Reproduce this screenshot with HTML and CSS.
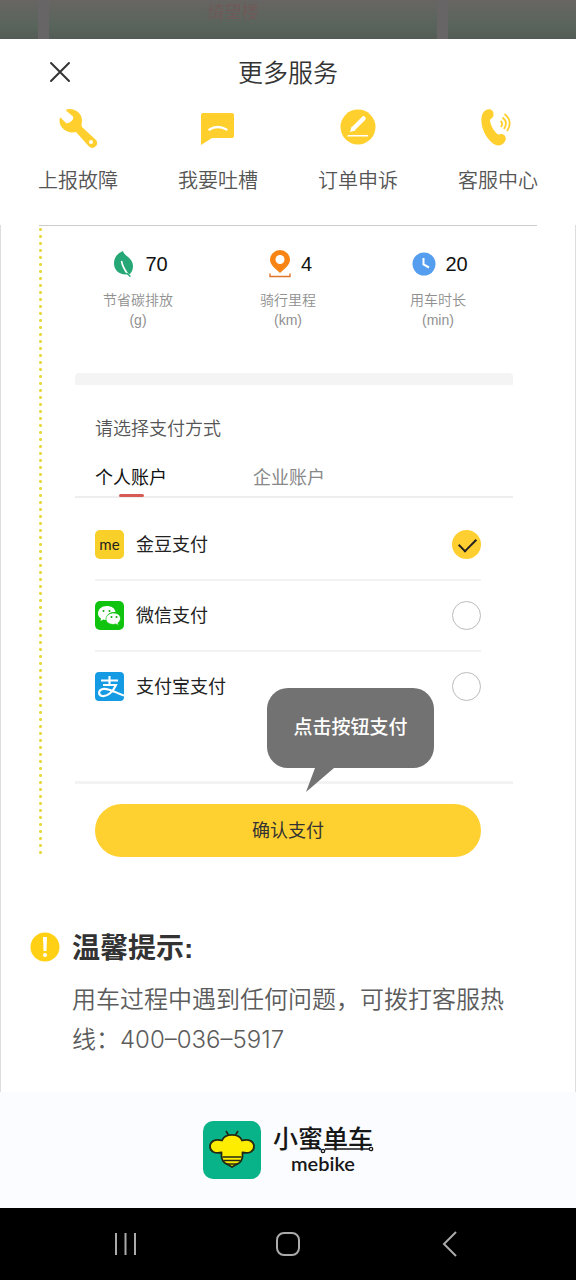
FILE: index.html
```html
<!DOCTYPE html>
<html lang="zh-CN">
<head>
<meta charset="utf-8">
<meta name="viewport" content="width=device-width, initial-scale=1">
<title>更多服务</title>
<link rel="stylesheet" href="styles.css">
</head>
<body>
<div class="map"><span class="road road-left"></span><span class="place">绮望楼</span><span class="road road-right"></span></div>
<main class="sheet">
  <header class="sheet-head">
    <button class="close" type="button" aria-label="关闭"><svg width="22" height="22" viewBox="0 0 22 22"><path d="M2 2 20 20M20 2 2 20" fill="none" stroke="#333" stroke-width="2" stroke-linecap="round"/></svg></button>
    <h1 class="title">更多服务</h1>
  </header>
  <nav class="services">
    <button class="service" type="button">
      <svg width="42" height="42" viewBox="0 0 42 42"><path d="M9 2.500C17 0 25 6 25 13c0 3-1 5 0 7l14 13c4 5-3 10.500-7 6.500L19 25C11 27 3 22 2.500 14c0-2 .3-3 1-3.500L9 16q2 1 5-1.500t2-5L9.500 4Z" fill="#ffcf2d"/><circle cx="34" cy="35" r="2" fill="#fff"/></svg>
      <span>上报故障</span>
    </button>
    <button class="service" type="button">
      <svg width="42" height="42" viewBox="0 0 42 42"><path d="M6 6h29q2 0 2 2v21q0 2-2 2H15L4 38V8q0-2 2-2Z" fill="#ffcf2d"/><path d="M12.500 22.500q8-5 17 0" fill="none" stroke="#fff" stroke-width="2.500" stroke-linecap="round"/></svg>
      <span>我要吐槽</span>
    </button>
    <button class="service" type="button">
      <svg width="42" height="42" viewBox="0 0 42 42"><circle cx="21" cy="20" r="17.500" fill="#ffcf2d"/><path d="m17 21 9.500-9.500" stroke="#fff" stroke-width="4.500" stroke-linecap="round"/><path d="m13 25 1.500-5.500 4 4ZM11 28h20v1.600H10Z" fill="#fff"/></svg>
      <span>订单申诉</span>
    </button>
    <button class="service" type="button">
      <svg width="42" height="42" viewBox="0 0 42 42"><path d="M9 3c5-2 8 1 7.500 5-.5 4-3.500 3-3.500 6 1 5 4 10.500 8 13.500 2 .5 4-2 7 1.500 2 3 0 7-4 9-6 2-12-4-16-11C4 19 2 7 9 3Z" fill="#ffcf2d"/><path d="M23.500 14q3 2 .5 6M25.500 10.500q6 4.500 1.500 11.500M27.500 7q9 7 2.500 17" fill="none" stroke="#ffcf2d" stroke-width="1.800"/></svg>
      <span>客服中心</span>
    </button>
  </nav>
  <div class="guide">
    <section class="demo">
      <dl class="stats">
        <div class="stat">
          <dt>节省碳排放<br>(g)</dt>
          <dd><svg width="24" height="28" viewBox="0 0 24 28"><path d="M11 1c1 5 10 7 10 15 0 3-1 6-3 8-10 2-16-3-16-11C2 7 6 3 11 1Z" fill="#25a875"/><path d="M9.500 11c1 6 3 9 7 14" fill="none" stroke="#fff" stroke-width="1.600"/><path d="m14.500 23 4 3.500" stroke="#25a875" stroke-width="1.600"/></svg>70</dd>
        </div>
        <div class="stat">
          <dt>骑行里程<br>(km)</dt>
          <dd><svg width="24" height="28" viewBox="0 0 24 28"><path d="M12 0a10 10 0 0 1 10 10c0 5-6 9-10 13C8 19 2 15 2 10A10 10 0 0 1 12 0Z" fill="#f88413"/><circle cx="12" cy="9.500" r="4.500" fill="#fff"/><path d="M2 23.500v3h20v-3" fill="none" stroke="#e0762b" stroke-width="1.400"/></svg>4</dd>
        </div>
        <div class="stat">
          <dt>用车时长<br>(min)</dt>
          <dd><svg width="24" height="28" viewBox="0 0 24 28"><circle cx="12" cy="14" r="11.500" fill="#559dee"/><path d="M11.500 8v6.500l5.500 3" fill="none" stroke="#fff" stroke-width="2"/></svg>20</dd>
        </div>
      </dl>
      <form class="payment">
        <h2 class="choose">请选择支付方式</h2>
        <div class="tabs" role="tablist">
          <button class="tab active" type="button" role="tab" aria-selected="true">个人账户</button>
          <button class="tab" type="button" role="tab" aria-selected="false">企业账户</button>
        </div>
        <div class="methods">
          <label class="method"><span class="pay-logo gold">me</span><span>金豆支付</span><input type="radio" name="pay" checked></label>
          <label class="method"><svg class="pay-logo" viewBox="0 0 29 29"><rect width="29" height="29" rx="5" fill="#10c30e"/><path d="M12 5C6.500 5 3 8.500 3 12.500c0 2.500 1.500 4 3 5L5.500 20l3-1.500q2 .7 4 .5C10 14 15 10.500 20.500 11 20 7 16 5 12 5Z" fill="#fff"/><path d="M19 12c-5 0-8 2.500-8 6 0 4 5 6.500 10 5l2.500 1.500-.5-2.500c5-4 2-10-4-10Z" fill="#fff" stroke="#10c30e" stroke-width=".7"/><g fill="#10a80e"><circle cx="8.500" cy="10" r="1"/><circle cx="14.500" cy="10" r="1"/><circle cx="16.500" cy="16" r="1"/><circle cx="21.500" cy="16" r="1"/></g></svg><span>微信支付</span><input type="radio" name="pay"></label>
          <label class="method"><svg class="pay-logo" viewBox="0 0 29 29"><rect width="29" height="29" rx="4" fill="#159be3"/><path d="M6 8.500h17M14.500 4v9M8 13h13C18 20 12 25 7 24c-4-1-4-6 1-7 6-1 13 4 21 6.500" fill="none" stroke="#fff" stroke-width="2.100"/></svg><span>支付宝支付</span><input type="radio" name="pay"></label>
        </div>
        <div class="submit-area">
          <div class="bubble">点击按钮支付<svg width="30" height="25" viewBox="0 0 30 25"><path d="M9 0h19L0 24Z" fill="#727272"/></svg></div>
          <button class="submit" type="button">确认支付</button>
        </div>
      </form>
    </section>
  </div>
  <section class="tips">
    <svg width="30" height="30" viewBox="0 0 30 30"><circle cx="15" cy="15" r="14.500" fill="#ffd013"/><path d="M13 5h4l-.5 14h-3Z" fill="#fff"/><circle cx="15" cy="23" r="2" fill="#fff"/></svg>
    <div>
      <h2>温馨提示:</h2>
      <p>用车过程中遇到任何问题，可拨打客服热线：400–036–5917</p>
    </div>
  </section>
  <footer class="brand">
    <svg width="58" height="58" viewBox="0 0 58 58"><rect width="58" height="58" rx="10" fill="#09b38a"/><path d="m23 10 3 5M35 10l-3 5" stroke="#222914" stroke-width="1.700"/><path d="M19 19.500C22 12 36 12 39 19.500c7-2 12 1 12 6 0 5-5 7.500-11.500 6C40 37 39 40 36 42l-7 4-7-4c-3-2-4-5-3.500-10.500C12 33 7 30.500 7 25.500c0-5 5-8 12-6Z" fill="#ffed00" stroke="#222914" stroke-width="1.800" stroke-linejoin="round"/><path d="M19.500 36h19M20.500 39.500h17M23 43h12" stroke="#222914" stroke-width="1.400"/></svg>
    <div class="brand-name"><strong>小蜜单车</strong><span>mebike</span><svg class="brand-chain" width="56" height="10" viewBox="0 0 56 10" fill="none" stroke="#171717" stroke-width="1.300"><circle cx="4" cy="7" r="1.700"/><path d="M6 5h44"/><circle cx="52" cy="5" r="1.700"/></svg></div>
  </footer>
</main>
<nav class="system-nav">
  <button type="button" aria-label="最近任务"><svg width="24" height="26" viewBox="0 0 24 26"><path d="M2 2v22M11.500 2v22M21 2v22"/></svg></button>
  <button type="button" aria-label="主页"><svg width="24" height="26" viewBox="0 0 24 26"><rect x="1" y="2" width="22" height="22" rx="7"/></svg></button>
  <button type="button" aria-label="返回"><svg width="24" height="26" viewBox="0 0 24 26"><path d="M18 1 6 13l12 12"/></svg></button>
</nav>
</body>
</html>
```
FILE: styles.css
```css
* { box-sizing: border-box; }
body, h1, h2, p, dl, dd { margin: 0; }
body {
  min-height: 100vh;
  display: flex;
  flex-direction: column;
  background: #fff;
  color: #333;
  font-family: "Liberation Sans", "Noto Sans CJK SC", sans-serif;
}
button {
  padding: 0;
  border: 0;
  background: none;
  color: inherit;
  font: inherit;
  cursor: pointer;
}
svg { display: block; flex: none; }
.map {
  display: grid;
  grid-template-columns: 38px 11px 1fr 11px 128px;
  height: 39px;
  background: linear-gradient(#686563, #58645b 70%, #535b55);
}
.road { background: #686566; }
.road-left { grid-column: 2; }
.road-right { grid-column: 4; }
.place {
  grid-column: 3;
  padding-right: 20px;
  color: #6f5a58;
  font-size: 17px;
  line-height: 26px;
  text-align: center;
}
.sheet { flex: 1; display: flex; flex-direction: column; }
.sheet-head {
  display: grid;
  grid-template-columns: 22px 1fr 22px;
  align-items: center;
  height: 66px;
  padding: 0 49px;
}
.title {
  padding-top: 2px;
  font-size: 25px;
  font-weight: 350;
  line-height: 36px;
  text-align: center;
}
.services {
  display: flex;
  justify-content: space-between;
  height: 120px;
  padding: 2px 38px 0;
}
.service {
  display: flex;
  flex-direction: column;
  align-items: center;
  justify-content: flex-start;
  gap: 18px;
  color: #555;
  font-size: 20px;
  font-weight: 350;
  line-height: 28px;
}
.guide {
  padding: 0 38px 68px;
  border: solid #ddd;
  border-width: 0 1px;
}
.demo {
  padding-top: 20px;
  border-top: 1px solid #ccc;
  background: radial-gradient(circle, #e6d83a 1px, transparent 2px) 0 0 / 3px 7px repeat-y;
}
.stats {
  display: grid;
  grid-template-columns: repeat(3, 1fr);
  height: 127px;
  padding: 0 24px;
}
.stat { display: flex; flex-direction: column; align-items: center; }
.stat dd {
  display: flex;
  align-items: center;
  gap: 9px;
  height: 36px;
  padding-left: 4px;
  color: #111;
  font-size: 20px;
}
.stat dt {
  order: 1;
  padding-top: 8px;
  color: #909090;
  font-size: 14px;
  font-weight: 350;
  line-height: 20px;
  text-align: center;
}
.payment { margin: 0 24px 0 36px; }
.payment::before {
  content: "";
  display: block;
  height: 12px;
  margin-bottom: 30px;
  border-radius: 4px 4px 0 0;
  background: #f4f4f4;
}
.choose {
  padding: 0 20px;
  color: #555;
  font-size: 18px;
  font-weight: 350;
  line-height: 28px;
}
.tabs {
  display: flex;
  gap: 86px;
  height: 55px;
  padding: 17px 20px 0;
  border-bottom: 2px solid #eee;
}
.tab {
  position: relative;
  height: 36px;
  color: #888;
  font-size: 18px;
  line-height: 28px;
}
.active { color: #111; }
.active::after {
  content: "";
  position: absolute;
  right: 23px;
  bottom: -1px;
  left: 24px;
  height: 3px;
  border-radius: 2px;
  background: #d75a55;
}
.methods { padding: 12px 32px 0 20px; }
.method {
  display: flex;
  align-items: center;
  gap: 12px;
  height: 71px;
  color: #222;
  font-size: 18px;
  line-height: 28px;
  border-bottom: 2px solid #f2f2f2;
}
.method:last-child { border-color: transparent; }
.pay-logo { width: 29px; height: 29px; }
.gold {
  border-radius: 5px;
  background: #f9d029;
  font-family: Lato, sans-serif;
  font-size: 15px;
  text-align: center;
}
.method input {
  appearance: none;
  width: 29px;
  height: 29px;
  margin: 0 0 0 auto;
  border: 1px solid #bbb;
  border-radius: 50%;
}
.method input:checked {
  border: 0;
  background: #ffcf31;
}
.method input:checked::after {
  content: "";
  display: block;
  width: 15px;
  height: 8px;
  margin: 8px 7px;
  border: solid #222;
  border-width: 0 0 2px 2px;
  transform: rotate(-45deg);
}
.submit-area {
  position: relative;
  margin-top: 58px;
  padding: 20px 32px 0 20px;
  border-top: 3px solid #f3f3f3;
}
.bubble {
  position: absolute;
  bottom: 89px;
  left: 192px;
  width: 167px;
  padding: 26px 0;
  border-radius: 21px;
  background: #727272;
  color: #fff;
  font-size: 19px;
  font-weight: 500;
  line-height: 28px;
  text-align: center;
}
.bubble svg { position: absolute; top: 100%; left: 39px; }
.submit {
  display: block;
  width: 100%;
  height: 53px;
  border-radius: 27px;
  background: #ffd130;
  font-size: 18px;
  line-height: 28px;
}
.tips {
  display: flex;
  align-items: flex-start;
  gap: 12px;
  flex: 1;
  padding: 7px 68px 0 29px;
  border: solid #ddd;
  border-width: 0 1px;
}
.tips h2 {
  font-size: 28px;
  font-weight: 700;
  line-height: 34px;
}
.tips p {
  padding-top: 14px;
  color: #5c5c5c;
  font-family: Inter, "Noto Sans CJK SC", sans-serif;
  font-size: 24px;
  font-weight: 350;
  line-height: 40px;
}
.brand {
  display: flex;
  align-items: center;
  justify-content: center;
  gap: 12px;
  height: 116px;
  background: #fafcff;
}
.brand-name {
  position: relative;
  display: flex;
  flex-direction: column;
  align-items: center;
  padding-top: 2px;
  color: #171717;
  line-height: 24px;
}
.brand-name strong { font-size: 25px; font-weight: 500; }
.brand-name span {
  font-family: Lato, sans-serif;
  font-size: 20px;
  font-weight: 600;
}
.brand-chain { position: absolute; top: 19px; right: -2px; }
.system-nav {
  display: flex;
  justify-content: space-between;
  align-items: center;
  height: 72px;
  padding: 0 114px;
  background: #000;
}
.system-nav svg {
  fill: none;
  stroke: #aaa;
  stroke-width: 2;
}
```
